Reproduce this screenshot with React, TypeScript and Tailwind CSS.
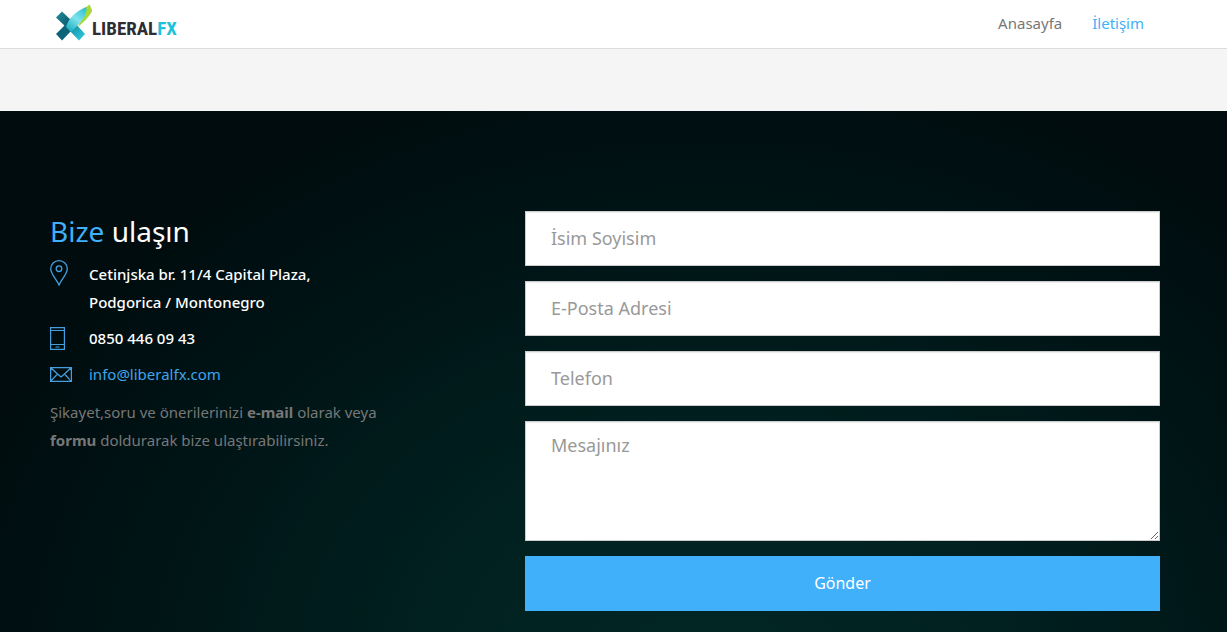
import React from "react";

const fieldClass =
  "block w-full border border-[#cccccc] bg-white px-[25px] text-lg text-[#555555] placeholder:text-[#999999] shadow-[inset_0_1px_1px_rgba(0,0,0,0.075)] outline-none focus:border-[#3fb0f9]";

function Logo() {
  return (
    <a href="#" aria-label="LiberalFX" className="flex items-end">
      <svg width="37" height="38" viewBox="55 5 37 38" aria-hidden="true">
        <defs>
          <linearGradient id="ribbon" gradientUnits="userSpaceOnUse" x1="86" y1="9" x2="68" y2="32">
            <stop offset="0" stopColor="#2cc0d4" />
            <stop offset="0.5" stopColor="#7fe3ec" />
            <stop offset="1" stopColor="#16a9bf" />
          </linearGradient>
          <linearGradient id="leg" gradientUnits="userSpaceOnUse" x1="70" y1="26" x2="83" y2="39">
            <stop offset="0" stopColor="#128ba3" />
            <stop offset="1" stopColor="#2cc6d8" />
          </linearGradient>
          <linearGradient id="arm" gradientUnits="userSpaceOnUse" x1="58" y1="15" x2="72" y2="28">
            <stop offset="0" stopColor="#1b8797" />
            <stop offset="1" stopColor="#0a4d60" />
          </linearGradient>
        </defs>
        <path d="M56 18.500 L62 12.500 L73 23 L67 29 Z" fill="url(#arm)" />
        <path d="M56 35 L67 24 L73 30 L62 41.500 Z" fill="#0d6478" />
        <path d="M75 24 L85 35 L79 41.500 L67 29 Z" fill="url(#leg)" />
        <path d="M85 9 L89.500 5.500 L92.500 12 C89 18 84 23 78 28 Z" fill="#a9d83c" />
        <path d="M66 28 C68 20 76 12 86 8 C88 14 83 21 77 27 L71 33 Z" fill="url(#ribbon)" />
      </svg>
      <span className="font-['Roboto_Condensed','Roboto',sans-serif] text-[19px] font-bold leading-[26px] text-[#2d2d33]">
        LIBERAL<span className="text-[#1cc3d9]">FX</span>
      </span>
    </a>
  );
}

function PinIcon() {
  return (
    <svg width="18" height="26" viewBox="0 0 18 26" fill="none" stroke="#459fdf" strokeWidth="1.300" aria-hidden="true">
      <path d="M9 25 C7 20 0.700 14 0.700 8.700 A8.300 8 0 0 1 17.300 8.700 C17.300 14 11 20 9 25 Z" />
      <circle cx="9" cy="8.700" r="2.800" />
    </svg>
  );
}

function PhoneIcon() {
  return (
    <svg width="15" height="23" viewBox="0 0 15 23" fill="none" stroke="#459fdf" strokeWidth="1.200" aria-hidden="true">
      <path d="M0.600 0.600 H14.400 V22.400 H0.600 Z M0.500 3.500 H14.500 M0.500 17.500 H14.500 M5.500 20 H9.500" />
    </svg>
  );
}

function MailIcon() {
  return (
    <svg width="22" height="15" viewBox="0 0 22 15" fill="none" stroke="#459fdf" strokeWidth="1.300" aria-hidden="true">
      <path d="M0.600 0.600 H21.400 V14.400 H0.600 Z M0.600 0.600 L7.500 7 L11 10 L14.500 7 L21.400 0.600 M0.600 14.400 L7.500 7 M21.400 14.400 L14.500 7" />
    </svg>
  );
}

export default function App() {
  return (
    <div className="flex min-h-screen flex-col bg-[#f5f5f5] font-['Noto_Sans',sans-serif] text-[15px] leading-7">
      <header className="flex h-[49px] items-center justify-between border-b border-[#dddddd] bg-white pb-0.5 pl-[55px] pr-[83px]">
        <Logo />
        <nav className="flex gap-[30px]">
          <a href="#" className="text-[#777777]">Anasayfa</a>
          <a href="#iletisim" className="text-[#3fb0f9]">İletişim</a>
        </nav>
      </header>
      <main
        id="iletisim"
        className="mt-[62px] grid flex-1 grid-cols-[475fr_635fr] bg-[#000c0d] bg-[radial-gradient(ellipse_65%_120%_at_58%_108%,#012725_0%,#012120_35%,#001416_72%,#000c0e_100%)] pb-[21px] pl-[50px] pr-[67px] pt-[100px]"
      >
        <section>
          <h1 className="text-[28px] leading-10 text-white">
            <span className="text-[#3fb0f9]">Bize</span> ulaşın
          </h1>
          <address className="mt-[9px] grid grid-cols-[39px_1fr] gap-y-2 not-italic font-medium text-white">
            <PinIcon />
            <p>
              Cetinjska br. 11/4 Capital Plaza,
              <br />
              Podgorica / Montonegro
            </p>
            <span className="flex items-center"><PhoneIcon /></span>
            <p>0850 446 09 43</p>
            <span className="flex items-center"><MailIcon /></span>
            <a href="mailto:info@liberalfx.com" className="font-normal text-[#3fa5ea]">info@liberalfx.com</a>
          </address>
          <p className="mt-[10px] text-[#777777]">
            Şikayet,soru ve önerilerinizi <b>e-mail</b> olarak veya
            <br />
            <b>formu</b> doldurarak bize ulaştırabilirsiniz.
          </p>
        </section>
        <form className="flex flex-col gap-[15px]" onSubmit={(e) => e.preventDefault()}>
          <input type="text" aria-label="İsim Soyisim" placeholder="İsim Soyisim" className={`${fieldClass} h-[55px] pb-0.5`} />
          <input type="email" aria-label="E-Posta Adresi" placeholder="E-Posta Adresi" className={`${fieldClass} h-[55px] pb-0.5`} />
          <input type="tel" aria-label="Telefon" placeholder="Telefon" className={`${fieldClass} h-[55px] pb-0.5`} />
          <textarea aria-label="Mesajınız" placeholder="Mesajınız" className={`${fieldClass} h-[120px] resize py-[9px]`} />
          <button type="submit" className="h-[55px] bg-[#3fb0f9] pb-0.5 text-base text-white">Gönder</button>
        </form>
      </main>
    </div>
  );
}
